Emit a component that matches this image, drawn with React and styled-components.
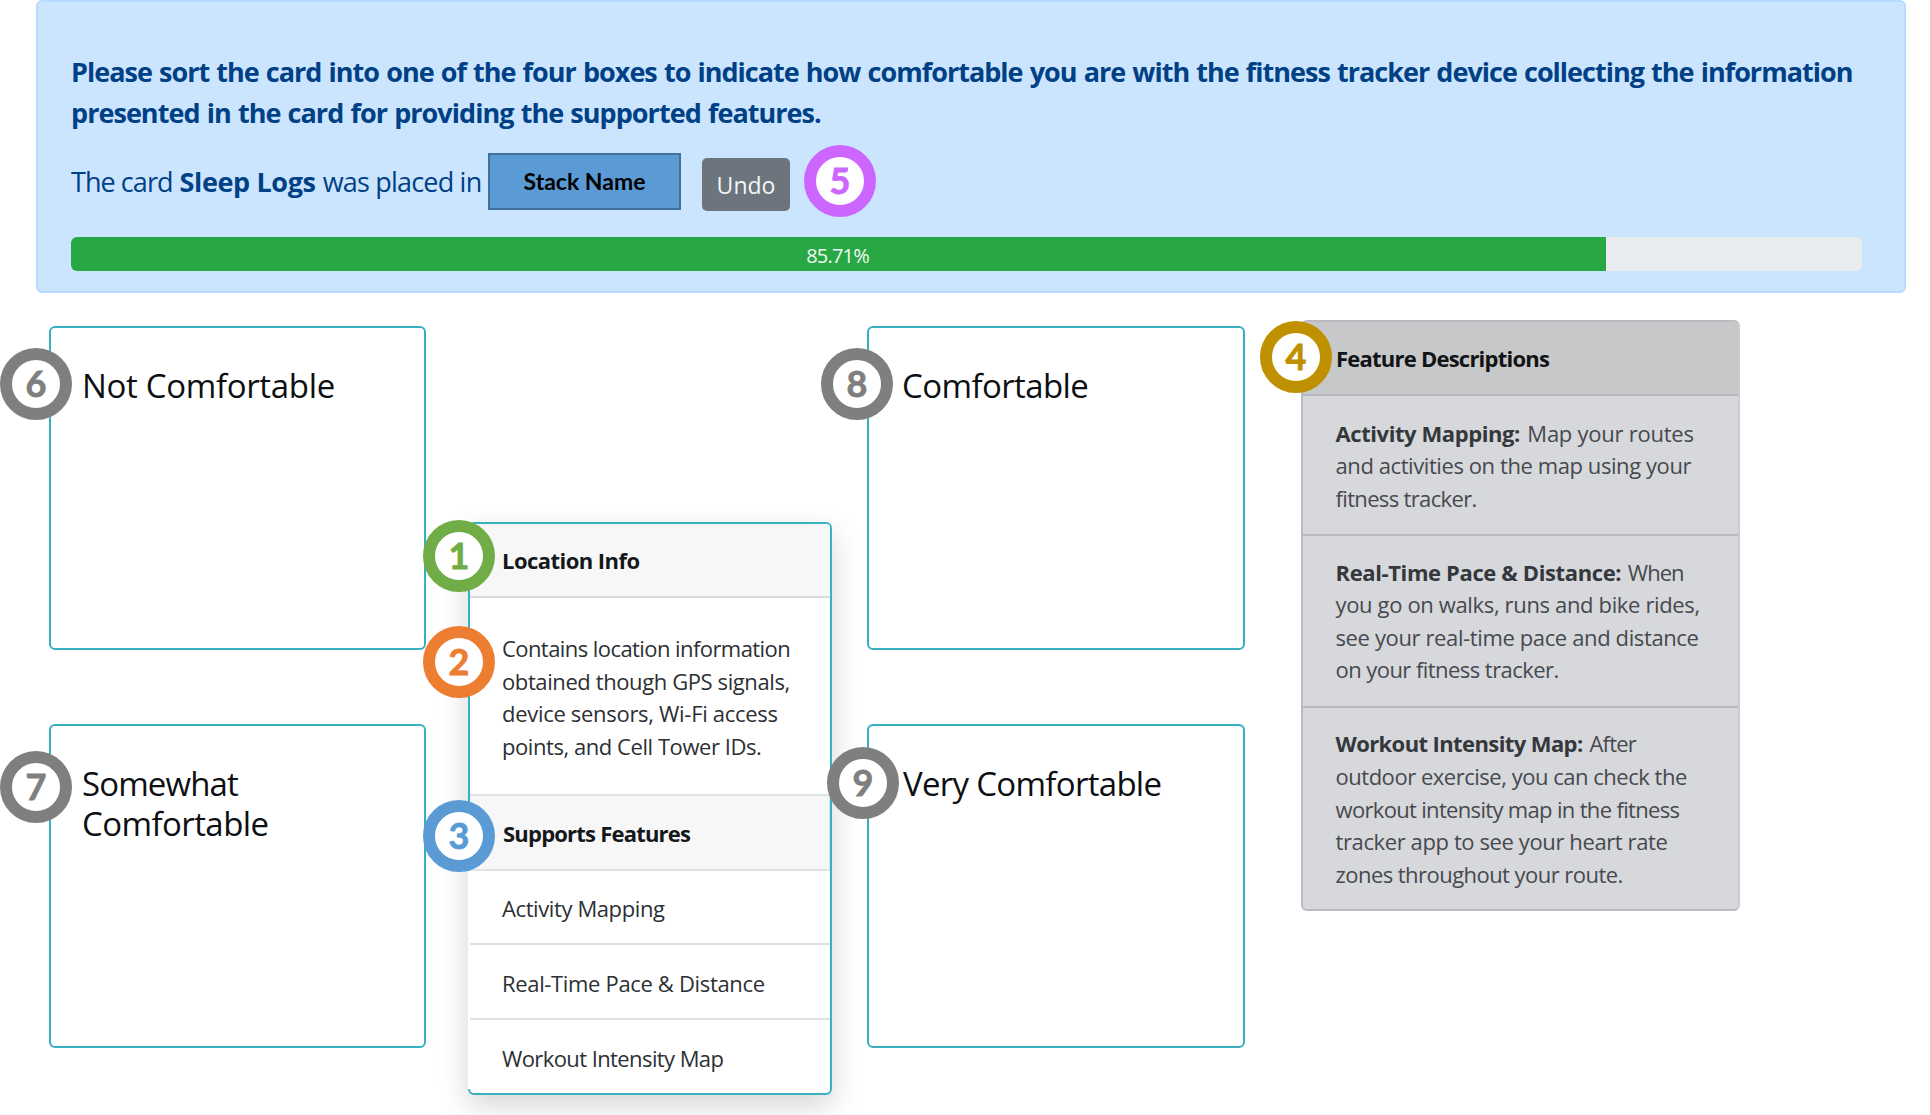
import React from 'react';
import styled, { createGlobalStyle } from 'styled-components';

const GlobalStyle = createGlobalStyle`
  *, *::before, *::after { box-sizing: border-box; }
  body {
    margin: 0;
    background: #fff;
    font-family: "Open Sans", "Noto Sans", sans-serif;
    overflow: hidden;
  }
`;

const Page = styled.main`
  width: 1930px;
  height: 1115px;
  overflow: hidden;
`;

const Line = styled.span`
  display: ${p => (p.$inline ? 'inline' : 'block')};
  white-space: pre;
  letter-spacing: ${p => p.$ls || 0}px;
  word-spacing: ${p => p.$ws || 0}px;
  font-weight: ${p => (p.$bold ? 700 : 'inherit')};
  color: ${p => p.$color || 'inherit'};
`;

const Badge = styled.span`
  position: absolute;
  z-index: 2;
  left: ${p => p.$x}px;
  top: ${p => p.$y}px;
  width: 72px;
  height: 72px;
  border: 12px solid ${p => p.$color};
  border-radius: 50%;
  background: #fff;
  color: ${p => p.$color};
  font: 700 36px/46px Lato, sans-serif;
  -webkit-text-stroke: 0.8px ${p => p.$color};
  text-align: center;
`;

const Alert = styled.section`
  width: 1870px;
  height: 293px;
  margin-left: 36px;
  padding: 50px 42px 0 33px;
  background: #cce5ff;
  border: 2px solid #b8daff;
  border-radius: 6px;
  color: #004085;
  font-size: 27px;
`;

const Instructions = styled.p`
  margin: 0;
  font-weight: 700;
  line-height: 40.5px;
`;

const Placement = styled.div`
  display: flex;
  align-items: flex-start;
  height: 58px;
  margin-top: 20px;
  line-height: 58px;
  position: relative;
`;

const Sentence = styled.div`
  display: flex;
  gap: 7px;
  width: 417px;
`;

const StackName = styled.div`
  width: 193px;
  height: 57px;
  border: 2px solid #41719c;
  background: #5b9bd5;
  color: #000;
  font: 700 23px/53px Lato, sans-serif;
  text-align: center;
`;

const UndoButton = styled.button`
  width: 88px;
  height: 53px;
  margin: 5px 0 0 21px;
  padding: 1px 0 0;
  border: 0;
  border-radius: 5px;
  background: #6c757d;
  color: #f4f5f6;
  font: 400 23px/53px "Open Sans", sans-serif;
`;

const Progress = styled.div`
  height: 34px;
  margin-top: 26px;
  border-radius: 6px;
  background: #e9ecef;
  overflow: hidden;
`;

const ProgressFill = styled.div`
  height: 100%;
  padding: 1px 2px 0 0;
  background: #28a745;
  color: #f3faf4;
  font-size: 20px;
  line-height: 35px;
  letter-spacing: -0.8px;
  text-align: center;
`;

const Board = styled.section`
  display: flex;
  align-items: flex-start;
  padding-left: 49px;
`;

const StackColumn = styled.div`
  display: flex;
  flex-direction: column;
  gap: 74px;
  width: ${p => p.$width}px;
  padding-top: 33px;
`;

const StackBox = styled.article`
  position: relative;
  height: 324px;
  padding: 38px 0 0 ${p => p.$pad}px;
  border: 2px solid #38b0c2;
  border-radius: 6px;
`;

const StackTitle = styled.h2`
  margin: 0;
  color: #0d0f12;
  font-size: 33px;
  font-weight: 400;
  line-height: 40px;
`;

const InfoCard = styled.article`
  position: relative;
  width: 364px;
  height: 573px;
  margin: 229px 35px 0 42px;
  border: 2px solid #3ab1c3;
  border-radius: 6px;
  background: #fff;
  box-shadow: 0 11px 30px rgba(0, 0, 0, 0.17);
  color: #2c3034;
  font-size: 22px;
  line-height: 32.7px;
`;

const CardHeader = styled.header`
  height: 74px;
  padding: 20px 0 0 32px;
  border-bottom: 2px solid #dcdcdc;
  border-radius: 4px 4px 0 0;
  background: #f7f7f7;
  color: #15181b;
  font-weight: 700;
`;

const CardBody = styled.div`
  height: 196px;
  padding: 34px 0 0 32px;
`;

const CardSubheader = styled.div`
  height: 77px;
  padding: 21px 0 0 33px;
  border: solid #dfe3e7;
  border-width: 2px 1px 2px 0;
  background: #f7f7f7;
  color: #15181b;
  font-weight: 700;
`;

const FeatureItem = styled.div`
  height: ${p => p.$height}px;
  padding: ${p => p.$top}px 0 0 32px;
  border-bottom: ${p => (p.$last ? 0 : '2px solid #dfdfdf')};
  box-shadow: -2px 0 0 #fff;
`;

const Descriptions = styled.aside`
  position: relative;
  width: 439px;
  height: 591px;
  margin: 27px 0 0 56px;
  border: 2px solid #b9bbbe;
  border-right-color: #c9cbce;
  border-radius: 6px;
  background: #d6d8db;
  color: #47494e;
  font-size: 22px;
  line-height: 32.6px;
`;

const DescriptionsHeader = styled.header`
  height: 74px;
  padding: 20px 0 0 33px;
  border-bottom: 2px solid #b6b8bb;
  border-radius: 4px 4px 0 0;
  background: #c6c8ca;
  color: #121315;
  font-weight: 700;
`;

const Description = styled.div`
  height: ${p => p.$height}px;
  padding: ${p => p.$top}px 0 0 32.5px;
  border-bottom: ${p => (p.$last ? 0 : '2px solid #b9bbbe')};
`;

const FeatureName = styled.strong`
  margin-right: 2px;
  color: #34373b;
  font-weight: 700;
  letter-spacing: ${p => p.$ls}px;
`;

const PROGRESS = 85.71;
const GRAY = '#7f7f7f';

const descriptions = [
  {
    name: 'Activity Mapping:', nameLs: -0.42, start: ' Map your routes', startLs: -0.25, height: 140, top: 20.5,
    lines: [['and activities on the map using your', -0.417], ['fitness tracker.', -0.655]],
  },
  {
    name: 'Real-Time Pace & Distance:', nameLs: -0.38, start: ' When', startLs: -1, height: 172, top: 19.5,
    lines: [
      ['you go on walks, runs and bike rides,', -0.351],
      ['see your real-time pace and distance', -0.376],
      ['on your fitness tracker.', -0.553],
    ],
  },
  {
    name: 'Workout Intensity Map:', nameLs: -0.6, start: ' After', startLs: -0.8, height: 201, top: 19.4, last: true,
    lines: [
      ['outdoor exercise, you can check the', -0.477],
      ['workout intensity map in the fitness', -0.672],
      ['tracker app to see your heart rate', -0.391],
      ['zones throughout your route.', -0.546],
    ],
  },
];

export default function App() {
  return (
    <Page>
      <GlobalStyle />
      <Alert>
        <Instructions>
          <Line $ls={-0.99} $ws={1.1}>Please sort the card into one of the four boxes to indicate how comfortable you are with the fitness tracker device collecting the information</Line>
          <Line $ls={-0.96} $ws={1.1}>presented in the card for providing the supported features.</Line>
        </Instructions>
        <Placement>
          <Sentence>
            <Line $ls={-0.94}>The card</Line>
            <Line $ls={-0.37} $bold>Sleep Logs</Line>
            <Line $ls={-0.8}>was placed in</Line>
          </Sentence>
          <StackName>Stack Name</StackName>
          <UndoButton type="button">Undo</UndoButton>
          <Badge $x={733} $y={-8} $color="#cc66ff">5</Badge>
        </Placement>
        <Progress>
          <ProgressFill style={{ width: `${PROGRESS}%` }}>{PROGRESS}%</ProgressFill>
        </Progress>
      </Alert>

      <Board>
        <StackColumn $width={377}>
          <StackBox $pad={31}>
            <StackTitle><Line $ls={-0.33}>Not Comfortable</Line></StackTitle>
            <Badge $x={-51} $y={20} $color={GRAY}>6</Badge>
          </StackBox>
          <StackBox $pad={31}>
            <StackTitle>
              <Line $ls={-0.882}>Somewhat</Line>
              <Line $ls={-0.575}>Comfortable</Line>
            </StackTitle>
            <Badge $x={-51} $y={25} $color={GRAY}>7</Badge>
          </StackBox>
        </StackColumn>

        <InfoCard>
          <CardHeader><Line $ls={-0.539}>Location Info</Line></CardHeader>
          <CardBody>
            <Line $ls={-0.57}>Contains location information</Line>
            <Line $ls={-0.4}>obtained though GPS signals,</Line>
            <Line $ls={-0.3}>device sensors, Wi-Fi access</Line>
            <Line $ls={-0.44}>points, and Cell Tower IDs.</Line>
          </CardBody>
          <CardSubheader><Line $ls={-0.787}>Supports Features</Line></CardSubheader>
          <FeatureItem $height={74} $top={20.5}><Line $ls={-0.396}>Activity Mapping</Line></FeatureItem>
          <FeatureItem $height={75} $top={22}><Line $ls={-0.34}>Real-Time Pace &amp; Distance</Line></FeatureItem>
          <FeatureItem $height={69} $top={21.5} $last><Line $ls={-0.592}>Workout Intensity Map</Line></FeatureItem>
          <Badge $x={-47} $y={-4} $color="#70ad47">1</Badge>
          <Badge $x={-47} $y={102} $color="#ed7d31">2</Badge>
          <Badge $x={-47} $y={276} $color="#5b9bd5">3</Badge>
        </InfoCard>

        <StackColumn $width={378}>
          <StackBox $pad={33}>
            <StackTitle><Line $ls={-0.6}>Comfortable</Line></StackTitle>
            <Badge $x={-48} $y={20} $color={GRAY}>8</Badge>
          </StackBox>
          <StackBox $pad={34}>
            <StackTitle><Line $ls={-0.703}>Very Comfortable</Line></StackTitle>
            <Badge $x={-42} $y={21} $color={GRAY}>9</Badge>
          </StackBox>
        </StackColumn>

        <Descriptions>
          <DescriptionsHeader><Line $ls={-0.767}>Feature Descriptions</Line></DescriptionsHeader>
          {descriptions.map(d => (
            <Description key={d.name} $height={d.height} $top={d.top} $last={d.last}>
              <Line>
                <FeatureName $ls={d.nameLs}>{d.name}</FeatureName>
                <Line $inline $ls={d.startLs}>{d.start}</Line>
              </Line>
              {d.lines.map(([text, ls]) => <Line key={text} $ls={ls}>{text}</Line>)}
            </Description>
          ))}
          <Badge $x={-43} $y={-1} $color="#bf9000">4</Badge>
        </Descriptions>
      </Board>
    </Page>
  );
}
